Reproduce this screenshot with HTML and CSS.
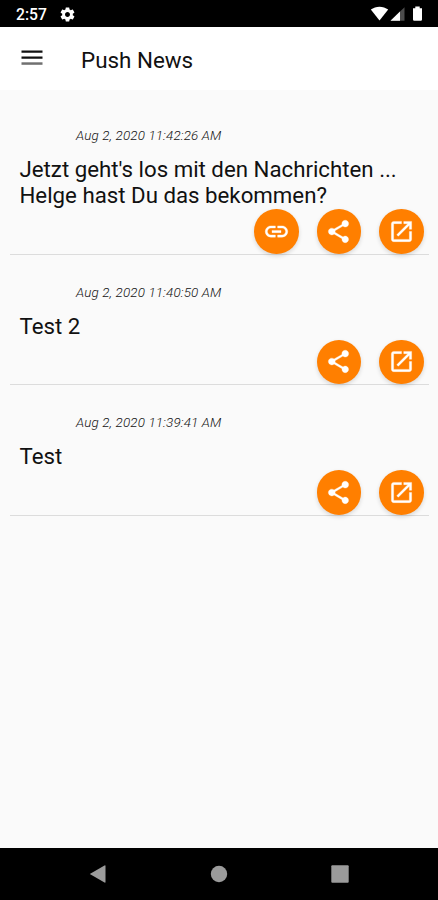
FILE: index.html
```
<!DOCTYPE html>
<html lang="de">
<head>
    <meta charset="UTF-8">
    <meta name="viewport" content="width=device-width, initial-scale=1.0">
    <title>Push News</title>
    <link rel="stylesheet" href="styles.css">
</head>
<body>
    <!-- icons used more than once -->
    <svg class="hidden">
        <symbol id="icon-share" viewBox="0 0 24 24">
            <path d="M18 16.08c-.76 0-1.44.3-1.96.77L8.91 12.7c.05-.23.09-.46.09-.7s-.04-.47-.09-.7l7.05-4.11c.54.5 1.25.81 2.04.81 1.66 0 3-1.34 3-3s-1.34-3-3-3-3 1.34-3 3c0 .24.04.47.09.7L8.04 9.81C7.5 9.31 6.79 9 6 9c-1.66 0-3 1.34-3 3s1.34 3 3 3c.79 0 1.5-.31 2.04-.81l7.12 4.16c-.05.21-.08.43-.08.65 0 1.61 1.31 2.92 2.92 2.92s2.92-1.31 2.92-2.92-1.31-2.92-2.92-2.92z"/>
        </symbol>
        <symbol id="icon-open" viewBox="0 0 24 24">
            <path d="M19 19H5V5h7V3H5c-1.11 0-2 .9-2 2v14c0 1.1.89 2 2 2h14c1.1 0 2-.9 2-2v-7h-2v7zM14 3v2h3.59l-9.83 9.83 1.41 1.41L19 6.41V10h2V3h-7z"/>
        </symbol>
    </svg>

    <div class="status-bar">
        <span class="clock">2:57</span>
        <svg class="settings" viewBox="0 0 24 24"><path d="M19.43 12.98c.04-.32.07-.64.07-.98s-.03-.66-.07-.98l2.11-1.65c.19-.15.24-.42.12-.64l-2-3.46c-.12-.22-.39-.3-.61-.22l-2.49 1c-.52-.4-1.08-.73-1.69-.98l-.38-2.65C14.46 2.18 14.25 2 14 2h-4c-.25 0-.46.18-.49.42l-.38 2.65c-.61.25-1.17.59-1.69.98l-2.49-1c-.23-.09-.49 0-.61.22l-2 3.46c-.13.22-.07.49.12.64l2.11 1.65c-.04.32-.07.65-.07.98s.03.66.07.98l-2.11 1.65c-.19.15-.24.42-.12.64l2 3.46c.12.22.39.3.61.22l2.49-1c.52.4 1.08.73 1.69.98l.38 2.65c.03.24.24.42.49.42h4c.25 0 .46-.18.49-.42l.38-2.65c.61-.25 1.17-.59 1.69-.98l2.49 1c.23.09.49 0 .61-.22l2-3.46c.12-.22.07-.49-.12-.64l-2.11-1.65zM12 15.5c-1.93 0-3.5-1.57-3.5-3.5s1.57-3.5 3.5-3.5 3.5 1.57 3.5 3.5-1.57 3.5-3.5 3.5z"/></svg>
        <svg class="signals" viewBox="0 0 54 18">
            <path d="M0.800 4.600C5.800 0.700 13.200 0.700 18.200 4.600L9.500 15.600z"/>
            <path d="M20.500 15.800L34.500 2.200V15.800z" opacity=".3"/>
            <path d="M20.500 15.800L30 6.500V15.800z"/>
            <path d="M43 3.200h2.300V1.500h4.400v1.700H52v11.400a1.200 1.200 0 0 1-1.200 1.200h-6.600a1.200 1.200 0 0 1-1.200-1.200z"/>
        </svg>
    </div>

    <header class="toolbar">
        <svg class="menu" viewBox="0 0 22 16">
            <path d="M0.500 0.500h21v2.300h-21zM0.500 6.500h21v2.300h-21z"/>
            <path d="M0.500 12.300h21v2.500h-21z" opacity=".6"/>
        </svg>
        <h1>Push News</h1>
    </header>

    <main class="news">
        <article class="item">
            <time>Aug 2, 2020 11:42:26 AM</time>
            <p class="text">Jetzt geht's los mit den Nachrichten ...<br>Helge hast Du das bekommen?</p>
            <div class="actions">
                <button type="button" class="fab" aria-label="Link"><svg viewBox="0 0 24 24"><path d="M3.900 12c0-1.710 1.390-3.100 3.100-3.100h4V7H7c-2.760 0-5 2.240-5 5s2.240 5 5 5h4v-1.900H7c-1.710 0-3.100-1.390-3.100-3.100zM8 13h8v-2H8v2zm9-6h-4v1.900h4c1.710 0 3.100 1.390 3.100 3.100s-1.390 3.100-3.100 3.100h-4V17h4c2.760 0 5-2.240 5-5s-2.240-5-5-5z"/></svg></button>
                <button type="button" class="fab" aria-label="Teilen"><svg><use href="#icon-share"/></svg></button>
                <button type="button" class="fab" aria-label="Öffnen"><svg><use href="#icon-open"/></svg></button>
            </div>
        </article>
        <article class="item">
            <time>Aug 2, 2020 11:40:50 AM</time>
            <p class="text">Test 2</p>
            <div class="actions">
                <button type="button" class="fab" aria-label="Teilen"><svg><use href="#icon-share"/></svg></button>
                <button type="button" class="fab" aria-label="Öffnen"><svg><use href="#icon-open"/></svg></button>
            </div>
        </article>
        <article class="item">
            <time>Aug 2, 2020 11:39:41 AM</time>
            <p class="text">Test</p>
            <div class="actions">
                <button type="button" class="fab" aria-label="Teilen"><svg><use href="#icon-share"/></svg></button>
                <button type="button" class="fab" aria-label="Öffnen"><svg><use href="#icon-open"/></svg></button>
            </div>
        </article>
    </main>

    <nav class="nav-bar">
        <svg viewBox="0 0 18 18"><path d="M0.800 9L15.500 0.500Q16.500 0 16.500 1V17Q16.500 18 15.500 17.500z"/></svg>
        <svg viewBox="0 0 18 18"><circle cx="9" cy="9" r="8.200"/></svg>
        <svg viewBox="0 0 18 18"><rect x="0.300" y="0.300" width="17.400" height="17.400" rx="1"/></svg>
    </nav>
</body>
</html>
```
FILE: styles.css
```
* {
    box-sizing: border-box;
}

body {
    margin: 0;
    height: 900px;
    display: flex;
    flex-direction: column;
    overflow: hidden;
    background: #fafafa;
    color: #111;
    font-family: Roboto, sans-serif;
}

svg {
    display: block;
    fill: currentColor;
}

.hidden {
    display: none;
}

.status-bar {
    height: 27px;
    padding: 0 14px 0 16px;
    display: flex;
    align-items: center;
    background: #000;
    color: #fff;
}

.clock {
    width: 43px;
    font-size: 15.700px;
    font-weight: 500;
    line-height: 27px;
    padding-top: 2px;
}

.settings {
    width: 17px;
    height: 17px;
    margin-top: 2px;
}

.signals {
    width: 54px;
    height: 18px;
    margin-left: auto;
    margin-top: 5px;
    align-self: flex-start;
}

.toolbar {
    height: 63px;
    padding-left: 21px;
    display: flex;
    align-items: center;
    background: #fff;
}

.menu {
    width: 22px;
    height: 16px;
    margin-bottom: 1px;
}

.toolbar h1 {
    margin: 2px 0 0 38px;
    font-size: 22.400px;
    font-weight: 400;
    line-height: 28px;
}

.news {
    flex: 1;
    padding: 8px 9px 0 10px;
}

.item {
    padding: 29px 5.500px 0 9.500px;
    border-bottom: 1px solid #dcdcdc;
}

.item time {
    display: block;
    margin-left: 56.500px;
    color: #111;
    font-size: 13.400px;
    font-style: italic;
    font-weight: 300;
    letter-spacing: 0.150px;
    line-height: 17px;
}

.text {
    margin: 12px 0 1px;
    font-size: 22.250px;
    line-height: 26px;
}

.actions {
    display: flex;
    justify-content: flex-end;
    gap: 18px;
    height: 44.500px;
}

.fab {
    width: 44.500px;
    height: 44.500px;
    padding: 0;
    display: flex;
    align-items: center;
    justify-content: center;
    border: none;
    border-radius: 50%;
    background: #ff7f00;
    color: #fff;
    box-shadow: 0 2px 4px rgba(0, 0, 0, 0.14);
}

.fab svg {
    width: 27px;
    height: 27px;
    stroke: currentColor;
    stroke-width: 0.3;
}

.nav-bar {
    height: 52px;
    padding: 0 89px;
    display: flex;
    align-items: center;
    justify-content: space-between;
    background: #000;
    color: #9b9b9b;
}

.nav-bar svg {
    width: 18px;
    height: 18px;
}
```
